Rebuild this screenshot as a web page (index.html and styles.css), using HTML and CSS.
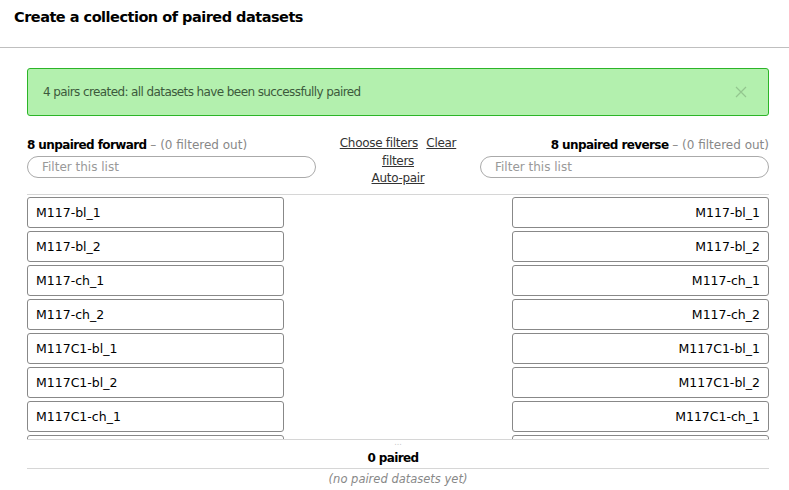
FILE: index.html
```html
<!DOCTYPE html>
<html>
<head>
<meta charset="utf-8">
<link rel="stylesheet" href="styles.css">
</head>
<body>
<div class="header"><h1 class="title">Create a collection of paired datasets</h1></div>
<div class="main">
  <div class="alert">
    <span class="alert-text">4 pairs created: all datasets have been successfully paired</span>
    <svg class="alert-close" width="12" height="12" viewBox="0 0 12 12"><path d="M1 1 L11 11 M11 1 L1 11" stroke="#93c68f" stroke-width="1.2" fill="none"/></svg>
  </div>
  <div class="controls">
    <div class="col col-left">
      <div class="col-title"><b>8 unpaired forward</b> <span class="muted">&ndash; (0 filtered out)</span></div>
      <div class="filter">Filter this list</div>
    </div>
    <div class="col-mid">
      <div class="mid-inner">
        <a class="lnk">Choose filters</a> <a class="lnk lnk-gap"><span>Clear</span> <span>filters</span></a><br>
        <a class="lnk">Auto-pair</a>
      </div>
    </div>
    <div class="col col-right">
      <div class="col-title right"><b>8 unpaired reverse</b> <span class="muted">&ndash; (0 filtered out)</span></div>
      <div class="filter">Filter this list</div>
    </div>
  </div>
  <div class="lists">
    <div class="list list-left">
      <div class="item">M117-bl_1</div>
      <div class="item">M117-bl_2</div>
      <div class="item">M117-ch_1</div>
      <div class="item">M117-ch_2</div>
      <div class="item">M117C1-bl_1</div>
      <div class="item">M117C1-bl_2</div>
      <div class="item">M117C1-ch_1</div>
      <div class="item">M117C1-ch_2</div>
    </div>
    <div class="list-mid"></div>
    <div class="list list-right">
      <div class="item">M117-bl_1</div>
      <div class="item">M117-bl_2</div>
      <div class="item">M117-ch_1</div>
      <div class="item">M117-ch_2</div>
      <div class="item">M117C1-bl_1</div>
      <div class="item">M117C1-bl_2</div>
      <div class="item">M117C1-ch_1</div>
      <div class="item">M117C1-ch_2</div>
    </div>
  </div>
  <div class="paired">
    <div class="dots">...</div>
    <div class="paired-title">0 paired</div>
    <div class="paired-empty">(no paired datasets yet)</div>
  </div>
</div>
</body>
</html>
```
FILE: styles.css
```css
html, body { margin: 0; padding: 0; background: #fff; }
body { font-family: "DejaVu Sans", sans-serif; font-size: 12px; color: #2c3143; overflow: hidden; }
.header { height: 47px; border-bottom: 1px solid #bfbfbf; padding: 0 14px; display: flex; align-items: center; }
.title { margin: 0; font-size: 14.5px; letter-spacing: -0.5px; font-weight: bold; color: #000; margin-top: -14px; }
.main { padding: 20px 20px 0 27px; }
.alert { height: 46px; border: 1px solid #2cb528; background: #b3f0ae; border-radius: 3px; display: flex; align-items: center; justify-content: space-between; padding: 0 21px 0 15px; color: #3c5a3c; }
.alert-text { letter-spacing: -0.6px; }
.alert-close { display: block; }
.controls { display: flex; margin-top: 21px; height: 57px; border-bottom: 1px solid #d6d6d6; }
.col { width: 289px; }
.col-title { line-height: 16px; }
.col-title b { color: #000; letter-spacing: -0.6px; }
.right { text-align: right; }
.muted { color: #888; }
.filter { margin-top: 3px; height: 20px; border: 1px solid #aaa; border-radius: 11px; color: #999; padding-left: 14px; line-height: 20px; }
.col-mid { flex: 1; display: flex; justify-content: center; margin-top: -2px; }
.mid-inner { width: 132px; text-align: center; line-height: 17.5px; letter-spacing: -0.3px; }
.lnk { color: #333; text-decoration: underline; }
.lnk-gap { margin-left: 5px; }
.lists { display: flex; height: 242px; overflow: hidden; padding-top: 2px; }
.list { width: 289px; display: flex; flex-direction: column; gap: 3px; }
.list-left { align-items: flex-start; }
.list-right { align-items: flex-end; }
.list-mid { flex: 1; }
.item { width: 239px; height: 29px; flex: none; border: 1px solid #888; border-radius: 3px; padding: 0 8px; line-height: 29px; color: #000; font-size: 12.5px; }
.list-right .item { text-align: right; }
.paired { border-top: 1px solid #d6d6d6; text-align: center; }
.dots { height: 8px; line-height: 6px; font-size: 8px; color: #c8c8c8; }
.paired-title { font-weight: bold; color: #000; line-height: 20px; border-bottom: 1px solid #d6d6d6; letter-spacing: -0.6px; padding-right: 10px; }
.paired-empty { font-style: italic; color: #888; font-size: 11.5px; line-height: 20px; }
```
